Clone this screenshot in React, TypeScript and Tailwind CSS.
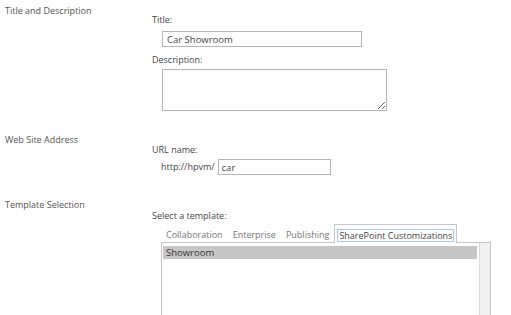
import { useState } from "react";

const TABS = ["Collaboration", "Enterprise", "Publishing", "SharePoint Customizations"];

export default function App() {
  const [activeTab, setActiveTab] = useState("SharePoint Customizations");

  return (
    <div className="w-[511px] h-[315px] overflow-hidden bg-white font-['Open_Sans',sans-serif] text-[9px] leading-[12px] text-[#444]">
      {/* Title and Description */}
      <div className="flex pt-[5px]">
        <div className="w-[152px] pl-[5px] shrink-0 text-[#555]">Title and Description</div>
        <div className="flex flex-col">
          <label className="mt-[9px]">Title:</label>
          <input
            defaultValue="Car Showroom"
            className="mt-[5px] ml-[10px] w-[200px] h-[16px] border border-[#b5b5b5] px-[4px] text-[9.5px] text-[#444] outline-none"
          />
          <label className="mt-[7px]">Description:</label>
          <textarea className="mt-[3px] ml-[10px] w-[225px] h-[42px] border border-[#b5b5b5] resize outline-none" />
        </div>
      </div>

      {/* Web Site Address */}
      <div className="flex mt-[23px]">
        <div className="w-[152px] pl-[5px] shrink-0 text-[#555]">Web Site Address</div>
        <div className="flex flex-col">
          <label className="mt-[10px]">URL name:</label>
          <div className="mt-[3px] ml-[9px] flex items-center gap-[3px]">
            <span>http://hpvm/</span>
            <input
              defaultValue="car"
              className="w-[113px] h-[16px] border border-[#b5b5b5] px-[3px] text-[9.5px] text-[#444] outline-none"
            />
          </div>
        </div>
      </div>

      {/* Template Selection */}
      <div className="flex mt-[24px]">
        <div className="w-[152px] pl-[5px] shrink-0 text-[#555]">Template Selection</div>
        <div className="flex flex-col">
          <label className="mt-[11px]">Select a template:</label>
          <div className="mt-[2px] ml-[9px] flex items-end">
            {TABS.map((tab) => {
              const active = tab === activeTab;
              return (
                <button
                  key={tab}
                  type="button"
                  onClick={() => setActiveTab(tab)}
                  className={
                    active
                      ? "relative z-10 -mb-px h-[19px] pt-[2px] px-[2px] bg-white border border-b-0 border-[#c6c6c6] text-[#444] flex items-center"
                      : "h-[18px] pt-[3px] px-[5px] text-[#777] flex items-center"
                  }
                >
                  <span className={active ? "border border-[#a9c8ec] px-[1px] leading-[11px]" : ""}>{tab}</span>
                </button>
              );
            })}
          </div>
          <div className="ml-[9px] w-[330px] h-[100px] border border-[#c6c6c6] flex">
            <div className="flex-1 pt-[3px] pl-[1px]">
              <div className="h-[13px] bg-[#c6c6c6] pl-[3px] leading-[13px] text-[9.5px] text-[#333]">Showroom</div>
            </div>
            <div className="w-[11px] ml-[2px] bg-[#f0f0f0] border-l border-[#dcdcdc]" />
          </div>
        </div>
      </div>
    </div>
  );
}
